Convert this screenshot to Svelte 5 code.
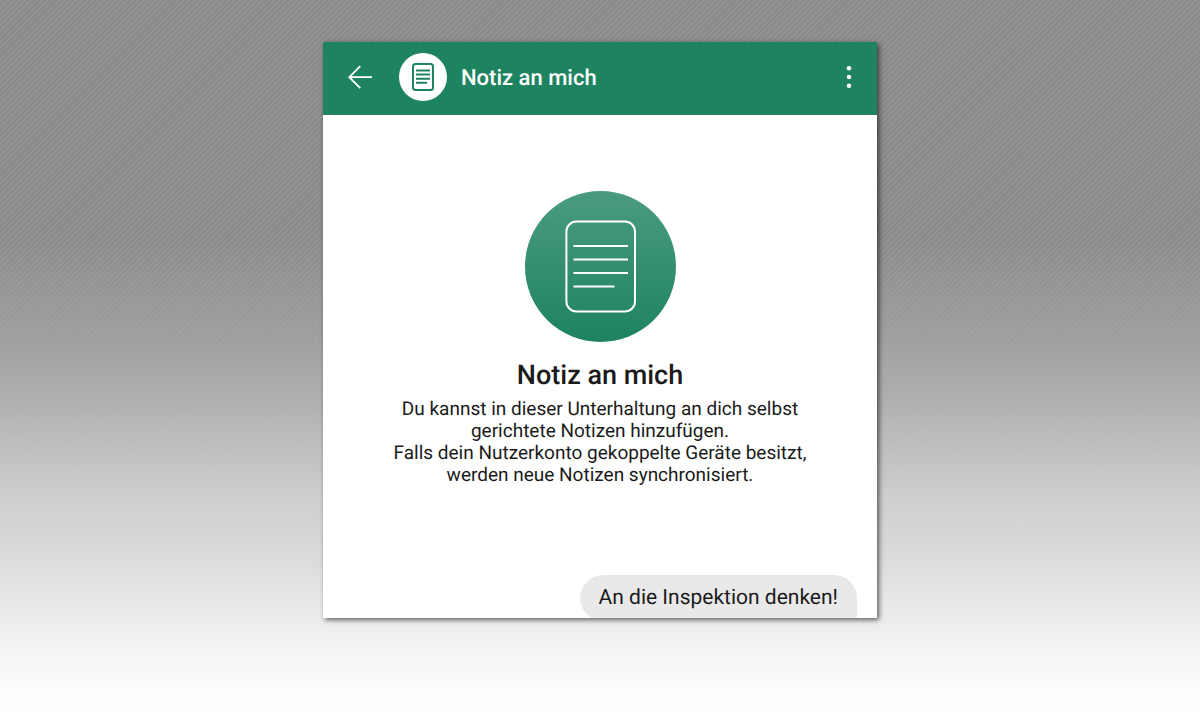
<script>
  let title = $state('Notiz an mich');
  let messages = $state(['An die Inspektion denken!']);
</script>

<main class="backdrop">
  <section class="chat">
    <header class="bar">
      <button class="icon-btn" type="button" aria-label="Zurück">
        <svg width="24" height="24" viewBox="0 0 24 24" fill="none" stroke="#fff" stroke-width="1.8">
          <path d="M24 12.2H1.5M12.3 1.2L1.3 12.2l11 11" />
        </svg>
      </button>
      <div class="avatar">
        <svg width="22" height="28" viewBox="0 0 22 28" fill="none" stroke="#1e835f">
          <rect x="1" y="1" width="20" height="26" rx="2.5" stroke-width="2" />
          <path d="M4 7.5h14M4 11.6h14M4 15.7h14M4 19.8h11" stroke-width="2" />
        </svg>
      </div>
      <h1>{title}</h1>
      <button class="icon-btn menu" type="button" aria-label="Menü">
        <svg width="6" height="24" viewBox="0 0 6 24" fill="#fff">
          <circle cx="3" cy="3.2" r="2.3" />
          <circle cx="3" cy="12" r="2.3" />
          <circle cx="3" cy="20.8" r="2.3" />
        </svg>
      </button>
    </header>

    <div class="intro">
      <div class="badge">
        <svg width="71" height="93" viewBox="0 0 71 93" fill="none" stroke="#fff" stroke-width="2">
          <rect x="1.4" y="1.5" width="68.6" height="90" rx="10" />
          <path d="M8.5 26H63M8.5 39.5H63M8.5 53H63M8.5 66.5H49.5" />
        </svg>
      </div>
      <h2>{title}</h2>
      <p>
        Du kannst in dieser Unterhaltung an dich selbst<br />
        gerichtete Notizen hinzufügen.<br />
        Falls dein Nutzerkonto gekoppelte Geräte besitzt,<br />
        werden neue Notizen synchronisiert.
      </p>
    </div>

    <div class="messages">
      {#each messages as message}
        <div class="bubble">{message}</div>
      {/each}
    </div>
  </section>
</main>

<style>
  :global(body) {
    margin: 0;
  }

  .backdrop {
    box-sizing: border-box;
    min-height: 100vh;
    padding: 42px 16px;
    font-family: Roboto, sans-serif;
    text-rendering: geometricPrecision;
    color: #1b1b1b;
    background:
      linear-gradient(
        to bottom,
        rgba(140, 140, 140, 0) 0%,
        rgba(140, 140, 140, 0) 33%,
        rgba(178, 178, 178, 0.5) 47%,
        rgba(181, 181, 181, 0.9) 56%,
        #cecece 69%,
        #dcdcdc 78%,
        #ececec 86%,
        #fcfcfc 95%,
        #fff 100%
      ),
      repeating-linear-gradient(135deg, #888 0, #949494 2px, #888 4px);
  }

  .chat {
    display: flex;
    flex-direction: column;
    max-width: 554px;
    height: 80vh;
    margin: 0 auto;
    overflow: hidden;
    background: #fff;
    box-shadow: 2px 2px 5px rgba(0, 0, 0, 0.6);
  }

  .bar {
    display: flex;
    flex-shrink: 0;
    align-items: center;
    box-sizing: border-box;
    height: 73px;
    padding: 0 25px 3px;
    background: #1e835f;
    color: #fff;
  }

  .icon-btn {
    display: flex;
    padding: 0;
    border: none;
    background: none;
    cursor: pointer;
  }

  .menu {
    margin-left: auto;
  }

  .avatar {
    display: flex;
    align-items: center;
    justify-content: center;
    width: 48px;
    height: 48px;
    margin: 0 14px 0 27px;
    border-radius: 50%;
    background: #fff;
  }

  h1 {
    margin: 0;
    padding-top: 4px;
    font-size: 22px;
    font-weight: 500;
    line-height: 26px;
  }

  .intro {
    display: flex;
    flex-direction: column;
    flex-shrink: 0;
    align-items: center;
    padding: 76px 24px 0;
    text-align: center;
  }

  .badge {
    display: flex;
    align-items: center;
    justify-content: center;
    width: 151px;
    height: 151px;
    border-radius: 50%;
    background: linear-gradient(#4a9b7f, #1e835f);
  }

  h2 {
    margin: 16px 0 6px;
    font-size: 27px;
    font-weight: 500;
    line-height: 34px;
  }

  p {
    margin: 0;
    font-size: 19px;
    line-height: 22px;
  }

  .messages {
    display: flex;
    flex-direction: column;
    flex-shrink: 0;
    align-items: flex-end;
    padding: 89px 20px 0;
  }

  .bubble {
    padding: 10px 19px;
    border-radius: 24px 24px 6px 24px;
    background: #e9e9e9;
    font-size: 21px;
    line-height: 26px;
  }
</style>
